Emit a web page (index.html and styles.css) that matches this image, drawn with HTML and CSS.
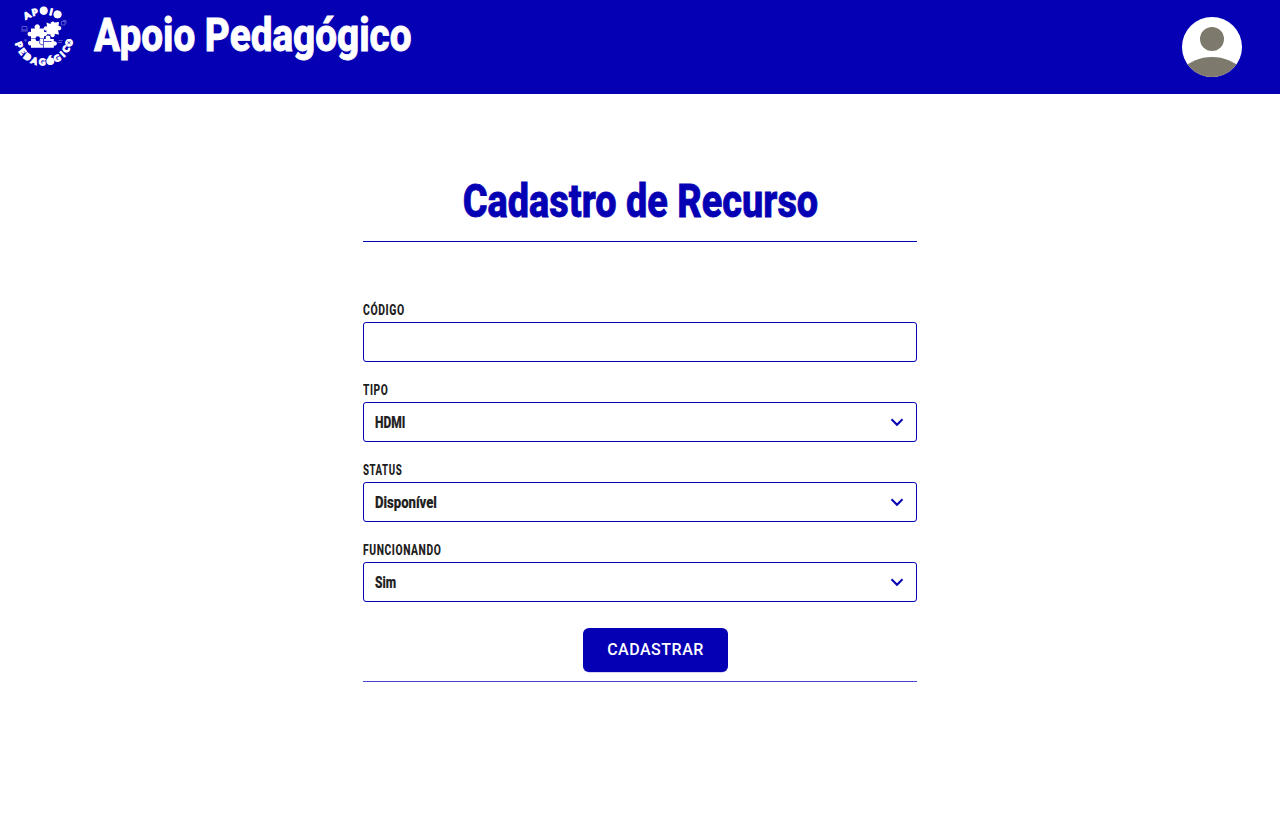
FILE: index.html
```
<!DOCTYPE html>
<html lang="pt-BR">
<head>
<meta charset="utf-8">
<title>Apoio Pedagógico</title>
<link rel="stylesheet" href="styles.css">
</head>
<body>
<header class="header">
  <div class="brand">
    <svg class="logo" viewBox="0 0 60 60" aria-hidden="true">
      <g class="logo-text">
        <text transform="translate(13 8.500) rotate(-28)" y="3.200">A</text>
        <text transform="translate(20.700 5.300) rotate(-13)" y="3.200">P</text>
        <text transform="translate(29.700 4)" y="3.200">O</text>
        <text transform="translate(37 5) rotate(14)" y="3.200">I</text>
        <text transform="translate(43.500 7.500) rotate(28)" y="3.200">O</text>
        <text transform="translate(5 38) rotate(68)" y="3.200">P</text>
        <text transform="translate(8.300 44.500) rotate(52)" y="3.200">E</text>
        <text transform="translate(13.500 50) rotate(36)" y="3.200">D</text>
        <text transform="translate(20.300 53.800) rotate(20)" y="3.200">A</text>
        <text transform="translate(28.300 55) rotate(3)" y="3.200">G</text>
        <text transform="translate(36.300 54.300) rotate(-14)" y="3.200">Ó</text>
        <text transform="translate(43.300 51.300) rotate(-30)" y="3.200">G</text>
        <text transform="translate(48.500 47.300) rotate(-43)" y="3.200">I</text>
        <text transform="translate(52 42.300) rotate(-56)" y="3.200">C</text>
        <text transform="translate(55 35.700) rotate(-72)" y="3.200">O</text>
      </g>
      <g fill="#fff">
        <circle cx="29.700" cy="4" r="3.700"/>
        <circle cx="43.500" cy="7.500" r="3.800"/>
        <circle cx="36.300" cy="54.300" r="3.200"/>
        <circle cx="13.500" cy="50" r="2.400"/>
        <path d="M17 21.500h4a2.700 2.700 0 1 1 4.500 0H30v3.500a2.200 2.200 0 1 1 0 4v2.500h-4a2.200 2.200 0 0 0-4.500 0H17v-2.500a2.300 2.300 0 1 1 0-4z"/>
        <path d="M32.500 15.500l4 1.500a2.200 2.200 0 0 1 4-1.500L45 15l-.5 4a2.200 2.200 0 1 1-.5 4l1 4.500-4.500-.5a2.200 2.200 0 1 1-4 .5L32 27l.5-3.500a2.200 2.200 0 1 1 .5-4z"/>
        <path d="M17 32h4.500a2.200 2.200 0 0 0 4.500 0h3.300v8.700H17v-2.500a2.200 2.200 0 1 1 0-4z"/>
        <path d="M29.900 32h2a2.400 2.400 0 1 1 4.200 0h3.700v2.500a2.200 2.200 0 1 1 0 4v2.200h-9.900z"/>
      </g>
      <path class="logo-detail" d="M29.500 34.500h8M26 33.500q-2 4 3 4.500"/>
      <path class="logo-faint" d="M8 19.500h5V23H8zM7 24h7M47.500 14.500H51V18h-3.500zM49 13.500h3v3M44.500 33.500h4M44 35.500h4M10 33.500q1.500-2 3 0M11.500 33v2"/>
      <circle cx="55" cy="35.700" r="3.200" fill="#fff"/>
      <path class="logo-detail" d="M53.500 34.500l3 2.400M53.500 37l3-2.600"/>
    </svg>
    <span class="brand-name">Apoio Pedagógico</span>
  </div>
  <svg class="avatar" viewBox="0 0 60 60" role="img" aria-label="Usuário">
    <defs><clipPath id="disc"><circle cx="30" cy="30" r="30"/></clipPath></defs>
    <circle cx="30" cy="30" r="30" fill="#fff"/>
    <g clip-path="url(#disc)" fill="#7d796c">
      <circle cx="30" cy="22" r="12"/>
      <circle cx="30" cy="85" r="45"/>
    </g>
  </svg>
</header>
<main class="main">
  <div class="heading"><h1 class="title">Cadastro de Recurso</h1></div>
  <form class="form">
    <div class="field">
      <label class="label label-code" for="codigo">CÓDIGO</label>
      <input class="control" id="codigo" type="text">
    </div>
    <div class="field">
      <span class="label label-type">TIPO</span>
      <div class="control">
        <span class="value value-type">HDMI</span>
        <svg class="chevron" viewBox="0 0 14 10"><path d="M1.500 2.300 7 7.800 12.500 2.300"/></svg>
      </div>
    </div>
    <div class="field">
      <span class="label label-status">STATUS</span>
      <div class="control">
        <span class="value value-status">Disponível</span>
        <svg class="chevron" viewBox="0 0 14 10"><path d="M1.500 2.300 7 7.800 12.500 2.300"/></svg>
      </div>
    </div>
    <div class="field">
      <span class="label label-working">FUNCIONANDO</span>
      <div class="control">
        <span class="value value-working">Sim</span>
        <svg class="chevron" viewBox="0 0 14 10"><path d="M1.500 2.300 7 7.800 12.500 2.300"/></svg>
      </div>
    </div>
    <button class="submit" type="button">CADASTRAR</button>
  </form>
</main>
</body>
</html>
```

FILE: styles.css
```
* { box-sizing: border-box; }
body { margin: 0; background: #fff; font-family: Roboto, "Liberation Sans", sans-serif; color: #202020; }
.header { height: 94px; background: #0600b4; display: flex; justify-content: space-between; align-items: flex-start; padding: 7px 38px 0 14px; }
.brand { display: flex; }
.logo { width: 60px; height: 60px; display: block; overflow: visible; }
.logo-text { font: 900 9px Lato, sans-serif; fill: #fff; stroke: #fff; stroke-width: 1; text-anchor: middle; }
.logo-detail { fill: none; stroke: #0600b4; stroke-width: .7; }
.logo-faint { fill: none; stroke: #7773d8; stroke-width: .7; }
.brand-name { margin-left: 20px; font-size: 47px; line-height: 56px; font-weight: 800; color: #fff; white-space: nowrap; transform: scaleX(.823); transform-origin: left; -webkit-text-stroke: .8px #fff; }
.avatar { width: 60px; height: 60px; margin-top: 10px; display: block; }
.main { width: 554px; margin: 0 auto; padding-top: 78px; }
.heading { height: 70px; padding-top: 1px; border-bottom: 1px solid #0600b4; display: flex; justify-content: center; }
.title { margin: 0; font-size: 47px; line-height: 56px; font-weight: 800; color: #0600b4; white-space: nowrap; transform: scaleX(.806); -webkit-text-stroke: .8px #0600b4; }
.form { padding-top: 60px; height: 440px; border-bottom: 1px solid #4a45ca; box-shadow: 0 1px #b4b2ea; }
.field { height: 80px; }
.label { display: block; width: max-content; height: 20px; font-size: 14px; line-height: 17px; font-weight: 800; letter-spacing: .8px; transform-origin: left; transform: scaleX(.73); }
.label-code { transform: scaleX(.745); }
.label-status { transform: scaleX(.69); }
.label-working { transform: scaleX(.735); }
.control { display: flex; align-items: center; justify-content: space-between; width: 100%; height: 40px; padding: 0 12px 0 11px; border: 1px solid #0600b4; border-radius: 3px; background: #fff; }
.value { padding-top: 1px; font-size: 16px; line-height: 20px; font-weight: 800; transform-origin: left; transform: scaleX(.75); -webkit-text-stroke: .2px #202020; }
.value-status { transform: scaleX(.82); }
.chevron { width: 14px; height: 10px; fill: none; stroke: #0600b4; stroke-width: 2; }
.submit { display: block; width: 145px; height: 44px; margin: 6px 0 0 220px; padding: 0 0 1px; border: 0; border-radius: 6px; background: #0600b4; box-shadow: 0 .5px #aaa8e5; color: #fff; font: 500 16px Roboto, sans-serif; letter-spacing: .5px; }
```
